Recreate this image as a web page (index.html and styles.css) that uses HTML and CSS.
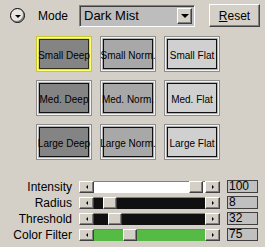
FILE: index.html
```html
<!DOCTYPE html>
<html lang="en">
<head>
  <meta charset="UTF-8">
  <title>Mode Panel</title>
  <link rel="stylesheet" href="styles.css">
</head>
<body>
  <div class="panel">

    <!-- Mode row -->
    <div class="top-row">
      <span class="round-btn"><span class="tri-down"></span></span>
      <span class="mode-label">Mode</span>
      <div class="combo">
        <span class="combo-text">Dark Mist</span>
        <span class="combo-btn"><span class="tri-down"></span></span>
      </div>
      <button class="reset-btn"><u>R</u>eset</button>
    </div>

    <!-- Preset grid -->
    <div class="preset-grid">
      <button class="preset deep selected">Small Deep</button>
      <button class="preset norm">Small Norm.</button>
      <button class="preset flat">Small Flat</button>
      <button class="preset deep">Med. Deep</button>
      <button class="preset norm">Med. Norm.</button>
      <button class="preset flat">Med. Flat</button>
      <button class="preset deep">Large Deep</button>
      <button class="preset norm">Large Norm.</button>
      <button class="preset flat">Large Flat</button>
    </div>

    <!-- Sliders -->
    <div class="sliders">
      <div class="slider-row">
        <span class="slider-label">Intensity</span>
        <div class="scroll">
          <span class="arrow-btn"><span class="tri-left"></span></span>
          <div class="track white">
            <span class="fill" style="width: 95px"></span>
            <span class="thumb"></span>
            <span class="fill rest"></span>
          </div>
          <span class="arrow-btn"><span class="tri-right"></span></span>
        </div>
        <span class="value">100</span>
      </div>
      <div class="slider-row">
        <span class="slider-label">Radius</span>
        <div class="scroll">
          <span class="arrow-btn"><span class="tri-left"></span></span>
          <div class="track black">
            <span class="fill" style="width: 9px"></span>
            <span class="thumb"></span>
            <span class="fill rest"></span>
          </div>
          <span class="arrow-btn"><span class="tri-right"></span></span>
        </div>
        <span class="value">8</span>
      </div>
      <div class="slider-row">
        <span class="slider-label">Threshold</span>
        <div class="scroll">
          <span class="arrow-btn"><span class="tri-left"></span></span>
          <div class="track black">
            <span class="fill" style="width: 14px"></span>
            <span class="thumb"></span>
            <span class="fill rest"></span>
          </div>
          <span class="arrow-btn"><span class="tri-right"></span></span>
        </div>
        <span class="value">32</span>
      </div>
      <div class="slider-row">
        <span class="slider-label">Color Filter</span>
        <div class="scroll">
          <span class="arrow-btn"><span class="tri-left"></span></span>
          <div class="track green">
            <span class="fill" style="width: 29px"></span>
            <span class="thumb"></span>
            <span class="fill rest"></span>
          </div>
          <span class="arrow-btn"><span class="tri-right"></span></span>
        </div>
        <span class="value">75</span>
      </div>
    </div>

  </div>
</body>
</html>
```

FILE: styles.css
```css
* {
  box-sizing: border-box;
}
body {
  margin: 0;
  background-color: #d4d0c8;
  font-family: "Liberation Sans", Arial, sans-serif;
  color: #000;
}
.panel {
  width: 265px;
  height: 247px;
  padding-top: 4px;
}

/* top row */
.top-row {
  display: flex;
  align-items: center;
  height: 23px;
}
.round-btn {
  display: flex;
  align-items: center;
  justify-content: center;
  width: 15px;
  height: 15px;
  margin-left: 10px;
  border: 1px solid #000;
  border-radius: 50%;
  background-color: #e8e6e0;
  box-shadow: inset -1px -1px 0 #808080;
}
.tri-down {
  width: 0;
  height: 0;
  border-left: 4px solid transparent;
  border-right: 4px solid transparent;
  border-top: 4px solid #000;
}
.round-btn .tri-down {
  border-left-width: 3px;
  border-right-width: 3px;
  border-top-width: 3px;
  margin-top: 1px;
}
.mode-label {
  font-size: 12px;
  margin-left: 13px;
  width: 41px;
}
.combo {
  display: flex;
  align-items: center;
  width: 116px;
  height: 22px;
  background-color: #bdbdbd;
  border-top: 1px solid #808080;
  border-left: 1px solid #808080;
  border-bottom: 1px solid #fff;
  border-right: 1px solid #fff;
  box-shadow: inset 1px 1px 0 #404040;
  padding: 2px 2px 2px 4px;
}
.combo-text {
  flex: 1;
  font-size: 13px;
}
.combo-btn {
  display: flex;
  align-items: center;
  justify-content: center;
  width: 15px;
  height: 16px;
  background-color: #d4d0c8;
  border-top: 1px solid #fff;
  border-left: 1px solid #fff;
  border-right: 1px solid #404040;
  border-bottom: 1px solid #404040;
  box-shadow: inset -1px -1px 0 #808080;
}
.reset-btn {
  margin-left: 14px;
  width: 51px;
  height: 23px;
  padding: 0;
  font-family: "Liberation Sans", Arial, sans-serif;
  font-size: 12px;
  background-color: #d4d0c8;
  border-top: 1px solid #fff;
  border-left: 1px solid #fff;
  border-right: 1px solid #404040;
  border-bottom: 1px solid #404040;
  box-shadow: inset -1px -1px 0 #808080;
}

/* preset grid */
.preset-grid {
  display: grid;
  grid-template-columns: repeat(3, 56px);
  grid-auto-rows: 36px;
  gap: 8px;
  margin: 9px 0 0 36px;
}
.preset {
  display: flex;
  align-items: center;
  justify-content: center;
  padding: 2px 0 0;
  font-family: "Liberation Sans", Arial, sans-serif;
  font-size: 10px;
  color: #000;
  border: 1px solid #8c8c8c;
  box-shadow: inset 0 0 0 1px #f4f4f4, inset 0 0 0 2px #b0b0b0, inset 0 0 0 3px #101010;
  white-space: nowrap;
}
.preset.deep {
  background-color: #848484;
}
.preset.norm {
  background-color: #a8a8a8;
}
.preset.flat {
  background-color: #d0d0d0;
}
.preset.selected {
  border-color: #c8c830;
  box-shadow: inset 0 0 0 1px #ffff70, inset 0 0 0 2px #e0e060, inset 0 0 0 3px #303010;
}

/* sliders */
.sliders {
  margin-top: 20px;
  display: flex;
  flex-direction: column;
  gap: 3px;
}
.slider-row {
  display: flex;
  align-items: center;
  height: 13px;
}
.slider-label {
  width: 72px;
  text-align: right;
  font-size: 12px;
}
.scroll {
  display: flex;
  margin-left: 7px;
  width: 141px;
  height: 12px;
}
.arrow-btn {
  display: flex;
  align-items: center;
  justify-content: center;
  width: 15px;
  height: 12px;
  background-color: #d4d0c8;
  border-top: 1px solid #fff;
  border-left: 1px solid #fff;
  border-right: 1px solid #404040;
  border-bottom: 1px solid #404040;
  box-shadow: inset -1px -1px 0 #808080;
}
.tri-left {
  width: 0;
  height: 0;
  border-top: 2px solid transparent;
  border-bottom: 2px solid transparent;
  border-right: 2px solid #000;
}
.tri-right {
  width: 0;
  height: 0;
  border-top: 2px solid transparent;
  border-bottom: 2px solid transparent;
  border-left: 2px solid #000;
}
.track {
  flex: 1;
  display: flex;
  border-top: 1px solid #808080;
}
.track.white .fill {
  background-color: #fff;
}
.track.black .fill {
  background-color: #101010;
}
.track.green .fill {
  background-color: #55bb44;
}
.fill.rest {
  flex: 1;
}
.thumb {
  width: 14px;
  background-color: #d4d0c8;
  border-top: 1px solid #fff;
  border-left: 1px solid #fff;
  border-right: 1px solid #404040;
  border-bottom: 1px solid #404040;
  box-shadow: inset -1px -1px 0 #808080;
  margin-top: -1px;
}
.value {
  margin-left: 7px;
  width: 31px;
  height: 13px;
  background-color: #c0c0c0;
  border: 1px solid #404040;
  font-size: 12px;
  line-height: 11px;
  padding-left: 1px;
}
```
